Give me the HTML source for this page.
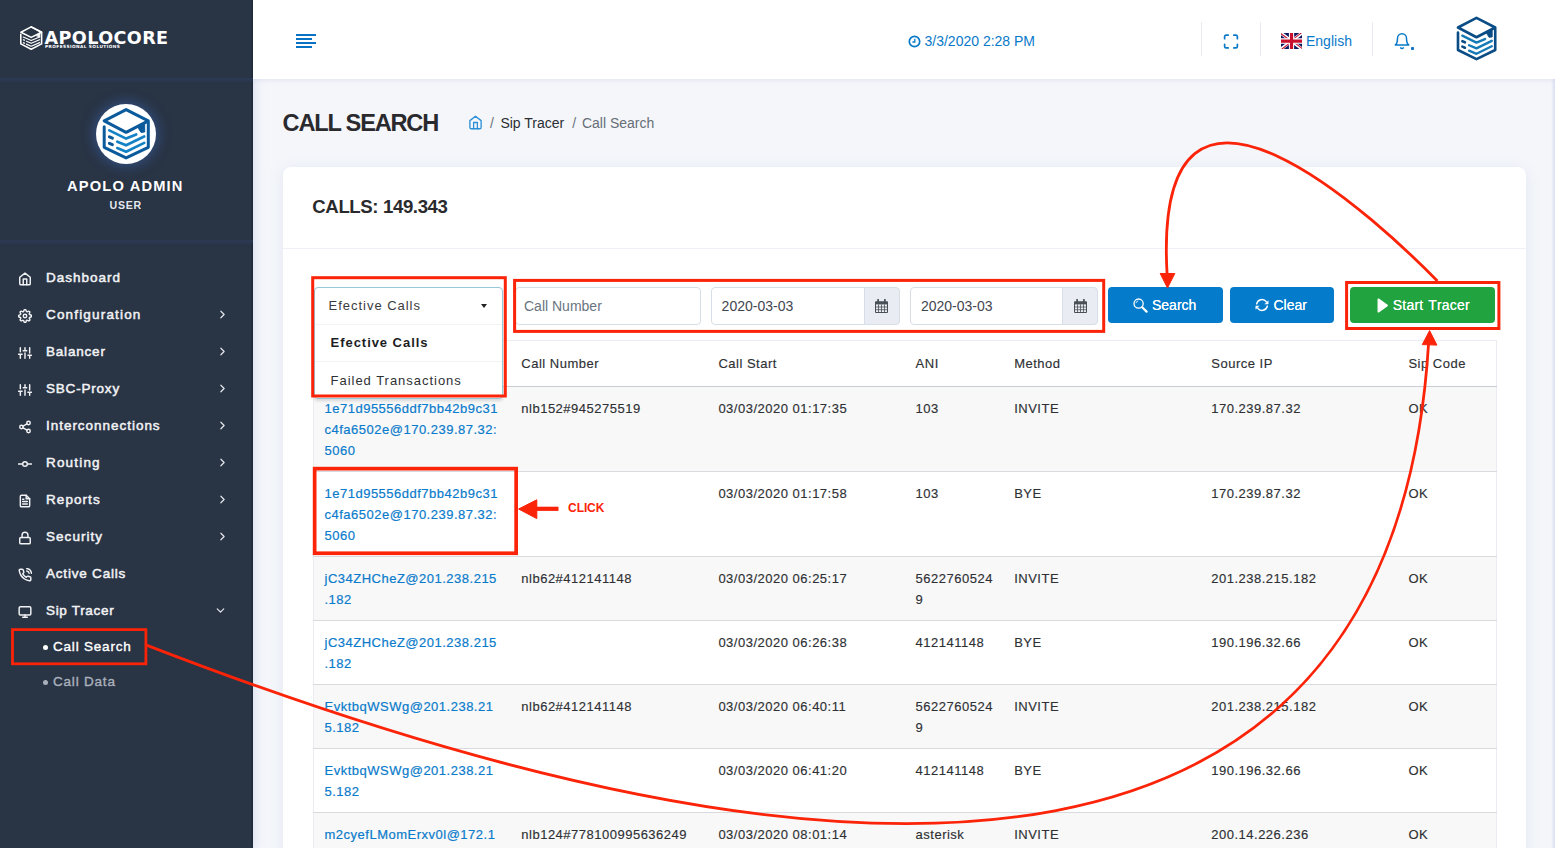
<!DOCTYPE html>
<html lang="en">
<head>
<meta charset="utf-8">
<title>Call Search</title>
<style>
*{box-sizing:border-box;margin:0;padding:0}
html,body{width:1555px;height:848px;overflow:hidden}
body{font-family:"Liberation Sans",Arial,sans-serif;font-size:14px;color:#333;background:#f4f6fa;position:relative}
a{text-decoration:none;color:#0a7bcb}
svg{display:block}
.abs{position:absolute}

/* ---------- sidebar ---------- */
#sidebar{position:absolute;left:0;top:0;width:253px;height:848px;background:#293445;z-index:5;box-shadow:0 0 10px 1px rgba(150,162,220,.3),inset -1.5px 0 0 #1f2a3b}
#brand{position:absolute;left:0;top:0;width:253px;height:79px;border-bottom:1.5px solid #2b3954;box-shadow:0 1px 3px 1px rgba(44,59,88,.9);clip-path:inset(0 0 -8px 0)}
#brand .name{position:absolute;left:44.5px;top:27.6px;font-family:"DejaVu Sans","Liberation Sans",sans-serif;font-size:17.6px;line-height:20px;font-weight:bold;color:#fff;letter-spacing:.4px;white-space:nowrap}
#brand .tag{position:absolute;left:45px;top:43.6px;font-family:"DejaVu Sans","Liberation Sans",sans-serif;font-size:4.3px;line-height:6px;font-weight:bold;color:#fff;letter-spacing:.42px;white-space:nowrap}
#user{position:absolute;left:0;top:79px;width:253px;height:161.5px;border-bottom:1.5px solid #2b3954;box-shadow:0 1px 3px 1px rgba(44,59,88,.9);clip-path:inset(0 0 -8px 0)}
#user .av{position:absolute;left:96px;top:24.5px;width:60px;height:60px;border-radius:50%;background:#fff;box-shadow:0 0 12px 3px rgba(52,84,140,.75)}
#user .uname{position:absolute;left:0;width:253px;top:98px;text-align:center;font-size:14.7px;line-height:18px;font-weight:bold;color:#fff;letter-spacing:1.15px;padding-right:2.4px}
#user .urole{position:absolute;left:0;width:253px;top:119.5px;text-align:center;font-size:10.6px;line-height:12px;font-weight:bold;color:#e4e7ec;letter-spacing:.75px;padding-right:1.6px}
.mi{position:absolute;left:0;width:253px;height:37px}
.mi .ic{position:absolute;left:17.9px;top:13px;width:14px;height:14px}
.mi .ic svg{width:14px;height:14px;stroke:#f1f2f4;fill:none;stroke-width:2.5;stroke-linecap:round;stroke-linejoin:round}
.mi .tx{position:absolute;left:46px;top:9.6px;font-size:13.5px;line-height:18px;font-weight:normal;-webkit-text-stroke:.5px #f1f2f4;color:#f1f2f4;letter-spacing:.8px;white-space:nowrap}
.mi .ch{position:absolute;left:216px;top:12px;width:13px;height:13px}
.mi .ch svg{width:13px;height:13px;stroke:#e6e8ec;fill:none;stroke-width:2.2;stroke-linecap:round;stroke-linejoin:round}
.sm{position:absolute;left:53px;font-size:13.5px;line-height:18px;font-weight:normal;-webkit-text-stroke:.38px currentColor;letter-spacing:.8px;white-space:nowrap}
.sm:before{content:"";position:absolute;left:-10.5px;top:7.5px;width:5px;height:5px;border-radius:50%;background:currentColor}

/* ---------- topbar ---------- */
#topbar{position:absolute;left:253px;top:0;width:1302px;height:79px;background:#fff;box-shadow:0 1px 5px rgba(160,170,220,.22);z-index:6;clip-path:inset(0 0 -12px 0)}
#topbar .div{position:absolute;top:22px;width:1px;height:34px;background:#e9ebf3}
.blue{color:#0879c9}

/* ---------- page ---------- */
#title{position:absolute;left:282.6px;top:108.3px;font-size:23.6px;line-height:30px;font-weight:bold;color:#2a2a2e;letter-spacing:-1.2px;white-space:nowrap}
#crumbs{position:absolute;left:469px;top:114px;font-size:14px;line-height:18px;white-space:nowrap}
#card{position:absolute;left:283px;top:167px;width:1243px;height:700px;background:#fff;border-radius:8px 8px 0 0;box-shadow:0 2px 14px rgba(170,180,215,.22)}
#card .hd{position:absolute;left:0;top:0;width:1243px;height:82px;border-bottom:1px solid #eff0f6}
#card .hd span{position:absolute;left:29.3px;top:28.3px;font-size:18.6px;line-height:24px;font-weight:bold;color:#2a2a2e;letter-spacing:-.38px;white-space:nowrap}

/* ---------- filters ---------- */
.inp{position:absolute;top:120px;height:38px;background:#fff;border:1px solid #d8dee8;border-radius:4px;font-size:14px;line-height:18px}
.inp span{position:absolute;left:9.5px;top:9.5px;white-space:nowrap}
.inp .ph{color:#69747f;left:8px;top:9px}
.inp .val{color:#3f4650;left:9.6px;top:8.8px}
.inp.d{border-radius:4px 0 0 4px}
.addon{position:absolute;top:120px;width:36px;height:38px;background:#e9ecf2;border:1px solid #d8dee8;border-radius:0 4px 4px 0}
.addon svg{position:absolute;left:10.3px;top:11.3px}
.btn{position:absolute;top:120px;height:36px;border-radius:4px;color:#fff;font-size:14px;line-height:18px}
.btn span{position:absolute;top:9px;white-space:nowrap;text-shadow:0 0 .4px #fff}
/* ---------- table ---------- */
#tbl{position:absolute;left:30px;top:173px;width:1183px;border-collapse:collapse;table-layout:fixed;font-size:13px;line-height:21px;letter-spacing:.5px;color:#2e3034}
#tbl th{height:46px;padding:0 10.5px;font-weight:normal;text-align:left;vertical-align:middle;border-top:1px solid #ebecf1;border-bottom:1px solid #c9cdd4;color:#2e3034}
#tbl td{padding:10.5px 10.5px;vertical-align:top;border-bottom:1px solid #d9dadd;white-space:nowrap}
#tbl{border-left:1px solid #ebecf1;border-right:1px solid #ebecf1}
#tbl tbody tr:nth-child(odd){background:#f8f8f8}
#tbl tr td{height:64px}
#tbl tr.r3 td{height:85px}
#tbl a{color:#0a7bcb;-webkit-text-stroke:.2px #0a7bcb}
#tbl th,#tbl td{-webkit-text-stroke:.15px #2e3034}
/* ---------- dropdown ---------- */
#dd{position:absolute;left:31px;top:120.4px;width:188.6px;height:111.6px;background:#fff;border:1px solid #96c8da;border-radius:4px;box-shadow:0 2px 3px rgba(34,36,38,.15);font-size:13px;letter-spacing:.97px;color:#2f3033}
#dd .sel{position:relative;height:35.9px;line-height:18px;padding:8.9px 0 0 13.6px;color:#3a3c40;white-space:nowrap}
#dd .sel i{position:absolute;left:166px;top:15.8px;border:3.4px solid transparent;border-top:4px solid #222;border-bottom:0}
#dd .it{height:37px;border-top:1px solid #f3f3f4;padding:8.9px 0 0 15.6px;line-height:18px;white-space:nowrap}
#dd .it+.it{padding-top:9.6px}
#dd .it.b{font-weight:bold;color:#1c1d1f;letter-spacing:.95px}
</style>
</head>
<body>

<!-- ======================= SIDEBAR ======================= -->
<div id="sidebar">
  <div id="brand">
    <svg class="abs" style="left:14px;top:20px" width="40" height="36" viewBox="0 0 40 36" fill="none" stroke="#fff" stroke-linejoin="round" stroke-linecap="round">
      <path d="M17.2 6.9 L27.6 12.2 V23.9 L17.2 29.2 L6.8 23.9 V14.4" stroke-width="1.6"/>
      <path d="M6.9 12.2 L17.2 6.9 L27.6 12.2 L17.2 17.4 Z" stroke-width="1.6"/>
      <path d="M25.8 13.2 V17 L22.8 16 Z" fill="#fff" stroke-width=".8"/>
      <path d="M9.2 17 L17.2 20.5 L25.6 17" stroke-width="1.15"/>
      <path d="M12.4 21.2 L17.2 23.3 L25.6 19.7" stroke-width="1.15"/>
      <path d="M12.4 24.1 L17.2 26.2 L25.6 22.6" stroke-width="1.15"/>
      <path d="M9.5 19.8 L10.4 20.2M9.5 22.8 L10.4 23.2" stroke-width="1.3"/>
    </svg>
    <div class="name">APOLOCORE</div>
    <div class="tag">PROFESSIONAL SOLUTIONS</div>
  </div>

  <div id="user">
    <div class="av">
      <svg class="abs" style="left:-6px;top:-5.5px" width="72" height="72" viewBox="0 0 72 72" fill="none" stroke-linejoin="round" stroke-linecap="round">
        <path d="M14.2 28.8 V49.3 L36.1 59.9 L58.3 49.3 V22.9 L36.1 11.6 L14.2 22.9 L36.1 34.3 L58.3 22.9" stroke="#0b5a9c" stroke-width="3"/>
        <path d="M48 28.8 L54.7 25.2 V34 L51 34.4 L49 31.2 Z" fill="#0b5a9c" stroke="#0b5a9c" stroke-width="1"/>
        <path d="M19.3 32.4 L36.1 40.6 L46.2 36.4" stroke="#1482c4" stroke-width="2.7"/>
        <path d="M27.3 43.7 L36.1 47.3 L54.2 38.5" stroke="#1482c4" stroke-width="2.7"/>
        <path d="M27.3 50.1 L36.1 53.7 L54.2 44.9" stroke="#1482c4" stroke-width="2.7"/>
        <path d="M19.4 38.9 L22.4 40.2M19.4 45.3 L22.4 46.6" stroke="#0b5a9c" stroke-width="3"/>
      </svg>
    </div>
    <div class="uname">APOLO ADMIN</div>
    <div class="urole">USER</div>
  </div>

  <div class="mi" style="top:259px"><span class="ic"><svg viewBox="0 0 24 24"><path d="M3 9l9-7 9 7v11a2 2 0 0 1-2 2H5a2 2 0 0 1-2-2z"/><polyline points="9 22 9 12 15 12 15 22"/></svg></span><span class="tx" style="letter-spacing:1.00px">Dashboard</span></div>
  <div class="mi" style="top:296px"><span class="ic"><svg viewBox="0 0 24 24"><circle cx="12" cy="12" r="3"/><path d="M19.4 15a1.65 1.65 0 0 0 .33 1.82l.06.06a2 2 0 0 1 0 2.83 2 2 0 0 1-2.83 0l-.06-.06a1.65 1.65 0 0 0-1.82-.33 1.65 1.65 0 0 0-1 1.51V21a2 2 0 0 1-2 2 2 2 0 0 1-2-2v-.09A1.65 1.65 0 0 0 9 19.4a1.65 1.65 0 0 0-1.82.33l-.06.06a2 2 0 0 1-2.83 0 2 2 0 0 1 0-2.83l.06-.06a1.65 1.65 0 0 0 .33-1.82 1.65 1.65 0 0 0-1.51-1H3a2 2 0 0 1-2-2 2 2 0 0 1 2-2h.09A1.65 1.65 0 0 0 4.6 9a1.65 1.65 0 0 0-.33-1.82l-.06-.06a2 2 0 0 1 0-2.83 2 2 0 0 1 2.83 0l.06.06a1.65 1.65 0 0 0 1.82.33H9a1.65 1.65 0 0 0 1-1.51V3a2 2 0 0 1 2-2 2 2 0 0 1 2 2v.09a1.65 1.65 0 0 0 1 1.51 1.65 1.65 0 0 0 1.82-.33l.06-.06a2 2 0 0 1 2.83 0 2 2 0 0 1 0 2.83l-.06.06a1.65 1.65 0 0 0-.33 1.82V9a1.65 1.65 0 0 0 1.51 1H21a2 2 0 0 1 2 2 2 2 0 0 1-2 2h-.09a1.65 1.65 0 0 0-1.51 1z"/></svg></span><span class="tx" style="letter-spacing:1.17px">Configuration</span><span class="ch"><svg viewBox="0 0 24 24"><polyline points="9 18 15 12 9 6"/></svg></span></div>
  <div class="mi" style="top:333px"><span class="ic"><svg viewBox="0 0 24 24"><path d="M4 21v-7M4 10V3M12 21v-9M12 8V3M20 21v-5M20 12V3M1 14h6M9 8h6M17 16h6"/></svg></span><span class="tx">Balancer</span><span class="ch"><svg viewBox="0 0 24 24"><polyline points="9 18 15 12 9 6"/></svg></span></div>
  <div class="mi" style="top:370px"><span class="ic"><svg viewBox="0 0 24 24"><path d="M4 21v-7M4 10V3M12 21v-9M12 8V3M20 21v-5M20 12V3M1 14h6M9 8h6M17 16h6"/></svg></span><span class="tx">SBC-Proxy</span><span class="ch"><svg viewBox="0 0 24 24"><polyline points="9 18 15 12 9 6"/></svg></span></div>
  <div class="mi" style="top:407px"><span class="ic"><svg viewBox="0 0 24 24"><circle cx="18" cy="5" r="3"/><circle cx="6" cy="12" r="3"/><circle cx="18" cy="19" r="3"/><path d="M8.59 13.51l6.83 3.98M15.41 6.51l-6.82 3.98"/></svg></span><span class="tx" style="letter-spacing:0.97px">Interconnections</span><span class="ch"><svg viewBox="0 0 24 24"><polyline points="9 18 15 12 9 6"/></svg></span></div>
  <div class="mi" style="top:444px"><span class="ic"><svg viewBox="0 0 24 24"><circle cx="12" cy="12" r="4"/><path d="M1.05 12H7M17.01 12h5.95"/></svg></span><span class="tx" style="letter-spacing:1.18px">Routing</span><span class="ch"><svg viewBox="0 0 24 24"><polyline points="9 18 15 12 9 6"/></svg></span></div>
  <div class="mi" style="top:481px"><span class="ic"><svg viewBox="0 0 24 24"><path d="M14 2H6a2 2 0 0 0-2 2v16a2 2 0 0 0 2 2h12a2 2 0 0 0 2-2V8z"/><path d="M14 2v6h6M16 13H8M16 17H8M10 9H8"/></svg></span><span class="tx" style="letter-spacing:1.07px">Reports</span><span class="ch"><svg viewBox="0 0 24 24"><polyline points="9 18 15 12 9 6"/></svg></span></div>
  <div class="mi" style="top:518px"><span class="ic"><svg viewBox="0 0 24 24"><rect x="3" y="11" width="18" height="11" rx="2" ry="2"/><path d="M7 11V7a5 5 0 0 1 10 0v4"/></svg></span><span class="tx" style="letter-spacing:1.04px">Security</span><span class="ch"><svg viewBox="0 0 24 24"><polyline points="9 18 15 12 9 6"/></svg></span></div>
  <div class="mi" style="top:555px"><span class="ic"><svg viewBox="0 0 24 24"><path d="M15.05 5A5 5 0 0 1 19 8.95M15.05 1A9 9 0 0 1 23 8.94m-1 7.98v3a2 2 0 0 1-2.18 2 19.79 19.79 0 0 1-8.63-3.07 19.5 19.5 0 0 1-6-6 19.79 19.79 0 0 1-3.07-8.67A2 2 0 0 1 4.11 2h3a2 2 0 0 1 2 1.72 12.84 12.84 0 0 0 .7 2.81 2 2 0 0 1-.45 2.11L8.09 9.91a16 16 0 0 0 6 6l1.27-1.27a2 2 0 0 1 2.11-.45 12.84 12.84 0 0 0 2.81.7A2 2 0 0 1 22 16.92z"/></svg></span><span class="tx">Active Calls</span></div>
  <div class="mi" style="top:592px"><span class="ic"><svg viewBox="0 0 24 24"><rect x="2" y="3" width="20" height="14" rx="2" ry="2"/><path d="M8 21h8M12 17v4"/></svg></span><span class="tx" style="letter-spacing:0.68px">Sip Tracer</span><span class="ch" style="left:214px"><svg viewBox="0 0 24 24"><polyline points="6 9 12 15 18 9"/></svg></span></div>
  <div class="sm" style="top:637.5px;color:#fff">Call Search</div>
  <div class="sm" style="top:672.5px;color:#a9b0bc">Call Data</div>
</div>

<!-- ======================= TOPBAR ======================= -->
<div id="topbar">
  <svg class="abs" style="left:43px;top:34px" width="20" height="14" viewBox="0 0 20 14"><path d="M0 1h20M0 5h16M0 9h20M0 13h16" stroke="#0872c4" stroke-width="2" fill="none"/></svg>
  <svg class="abs" style="left:655px;top:34.6px" width="13" height="13" viewBox="0 0 13 13" fill="none" stroke="#0879c9"><circle cx="6.5" cy="6.5" r="5.2" stroke-width="1.7"/><path d="M6.8 3.8V7H4.4" stroke-width="1.3"/></svg>
  <div class="abs blue" style="left:671.5px;top:32px;font-size:14px;line-height:18px;white-space:nowrap">3/3/2020 2:28 PM</div>
  <div class="div" style="left:948px"></div>
  <svg class="abs" style="left:969px;top:33px" width="18" height="17" viewBox="0 0 24 24" fill="none" stroke="#0879c9" stroke-width="2.4" stroke-linecap="round" stroke-linejoin="round"><path d="M8 3H5a2 2 0 0 0-2 2v3m18 0V5a2 2 0 0 0-2-2h-3m0 18h3a2 2 0 0 0 2-2v-3M3 16v3a2 2 0 0 0 2 2h3"/></svg>
  <div class="div" style="left:1007px"></div>
  <svg class="abs" style="left:1028px;top:33px" width="21" height="16" viewBox="0 0 640 480" preserveAspectRatio="none"><path fill="#0a1862" d="M0 0h640v480H0z"/><path fill="#fff" d="m75 0 244 181L562 0h78v62L400 241l240 178v61h-80L320 301 81 480H0v-60l239-178L0 64V0h75z"/><path fill="#c8102e" d="m424 281 216 159v40L369 281h55zm-184 20 6 35L54 480H0l240-179zM640 0v3L391 191l2-44L590 0h50zM0 0l239 176h-60L0 42V0z"/><path fill="#fff" d="M241 0v480h160V0H241zM0 160v160h640V160H0z"/><path fill="#c8102e" d="M0 193v96h640v-96H0zM273 0v480h96V0h-96z"/></svg>
  <div class="abs blue" style="left:1053px;top:32px;font-size:14px;line-height:18px">English</div>
  <div class="div" style="left:1119px"></div>
  <svg class="abs" style="left:1140px;top:32px" width="18" height="19" viewBox="0 0 24 25" fill="none" stroke="#0879c9" stroke-width="2" stroke-linecap="round" stroke-linejoin="round"><path d="M18 8A6 6 0 0 0 6 8c0 7-3 9-3 9h18s-3-2-3-9"/><path d="M13.73 21a2 2 0 0 1-3.46 0"/></svg>
  <div class="abs" style="left:1157.8px;top:46.9px;width:3px;height:3px;border-radius:.8px;background:#0f74c6"></div>
  <svg class="abs" style="left:1192.8px;top:8.2px" width="60.8" height="61.4" viewBox="0 0 72 72" preserveAspectRatio="none" fill="none" stroke-linejoin="round" stroke-linecap="round">
    <path d="M14.2 28.8 V49.3 L36.1 59.9 L58.3 49.3 V22.9 L36.1 11.6 L14.2 22.9 L36.1 34.3 L58.3 22.9" stroke="#0a4c85" stroke-width="3.1"/>
    <path d="M48 28.8 L54.7 25.2 V34 L51 34.4 L49 31.2 Z" fill="#0a4c85" stroke="#0a4c85" stroke-width="1"/>
    <path d="M19.3 32.4 L36.1 40.6 L46.2 36.4" stroke="#1579b6" stroke-width="2.8"/>
    <path d="M27.3 43.7 L36.1 47.3 L54.2 38.5" stroke="#1579b6" stroke-width="2.8"/>
    <path d="M27.3 50.1 L36.1 53.7 L54.2 44.9" stroke="#1579b6" stroke-width="2.8"/>
    <path d="M19.4 38.9 L22.4 40.2M19.4 45.3 L22.4 46.6" stroke="#0a4c85" stroke-width="3.1"/>
  </svg>
</div>

<!-- ======================= PAGE ======================= -->
<div class="abs" style="right:0;top:79px;width:4px;height:769px;background:linear-gradient(90deg,rgba(222,227,243,0),rgba(214,220,240,.9));z-index:2"></div>
<div id="title">CALL SEARCH</div>
<div id="crumbs">
  <svg class="abs" style="left:-1.2px;top:0.6px" width="15" height="15" viewBox="0 0 24 24" fill="none" stroke="#2a8fd6" stroke-width="2.1" stroke-linecap="round" stroke-linejoin="round"><path d="M3 9l9-7 9 7v11a2 2 0 0 1-2 2H5a2 2 0 0 1-2-2z"/><path d="M9 22V12h6v10"/></svg>
  <span class="abs" style="left:21px;color:#6c757d">/</span>
  <span class="abs" style="left:31.4px;color:#2b2e33">Sip Tracer</span>
  <span class="abs" style="left:103.2px;color:#6c757d">/</span>
  <span class="abs" style="left:112.9px;color:#666e77">Call Search</span>
</div>

<div id="card">
  <div class="hd"><span>CALLS: 149.343</span></div>
  <!-- filter row (coords relative to card: card left=283, top=167) -->
  <div class="inp" style="left:232px;width:186px"><span class="ph">Call Number</span></div>
  <div class="inp d" style="left:428px;width:154px"><span class="val">2020-03-03</span></div>
  <div class="addon" style="left:581px"><svg width="13" height="14" viewBox="0 0 13 14"><path d="M0.5 2.8h12v10.7h-12z" fill="none" stroke="#495057" stroke-width="1"/><path d="M0.5 2.8h12v2.6h-12z" fill="#495057"/><path d="M3.1 0.6v3M9.9 0.6v3" stroke="#495057" stroke-width="1.7" stroke-linecap="round"/><path d="M3.5 5.4v8M6.5 5.4v8M9.5 5.4v8M0.5 8h12M0.5 10.7h12" stroke="#495057" stroke-width=".8"/></svg></div>
  <div class="inp d" style="left:627.3px;width:152.7px"><span class="val">2020-03-03</span></div>
  <div class="addon" style="left:779.3px;width:35.5px"><svg width="13" height="14" viewBox="0 0 13 14"><path d="M0.5 2.8h12v10.7h-12z" fill="none" stroke="#495057" stroke-width="1"/><path d="M0.5 2.8h12v2.6h-12z" fill="#495057"/><path d="M3.1 0.6v3M9.9 0.6v3" stroke="#495057" stroke-width="1.7" stroke-linecap="round"/><path d="M3.5 5.4v8M6.5 5.4v8M9.5 5.4v8M0.5 8h12M0.5 10.7h12" stroke="#495057" stroke-width=".8"/></svg></div>

  <div class="btn" style="left:825px;width:115px;background:#047bcb">
    <svg class="abs" style="left:25px;top:11px" width="15" height="15" viewBox="0 0 15 15" fill="none" stroke="#fff"><circle cx="5.6" cy="5.6" r="4.6" stroke-width="1.3"/><path d="M9.2 9.2L13.6 13.6" stroke-width="2.2" stroke-linecap="round"/><path d="M2.9 5.2A2.9 2.9 0 0 1 5.2 2.9" stroke-width=".8"/></svg>
    <span style="left:44px">Search</span>
  </div>
  <div class="btn" style="left:947px;width:104px;background:#047bcb">
    <svg class="abs" style="left:25px;top:11px" width="14" height="14" viewBox="-7 -7 14 14" fill="none" stroke="#fff" stroke-width="1.45" stroke-linecap="round"><path d="M-5.3 -1.1A5.4 5.4 0 0 1 4.4 -3.1"/><path d="M5.3 1.1A5.4 5.4 0 0 1 -4.4 3.1"/><path d="M6.2 -3.9V-1H3.1Z M-6.2 3.9V1H-3.1Z" fill="#fff" stroke-width=".5" stroke-linejoin="round"/></svg>
    <span style="left:43.5px">Clear</span>
  </div>
  <div class="btn" style="left:1067px;width:145px;background:#21a33f">
    <svg class="abs" style="left:26.5px;top:10.5px" width="12" height="16" viewBox="0 0 12 16"><path d="M1.4 1.3L10.1 7.5L1.4 13.7Z" fill="#fff" stroke="#fff" stroke-width="1.7" stroke-linejoin="round"/></svg>
    <span style="left:42.8px;font-kerning:none;letter-spacing:.22px;word-spacing:.6px">Start Tracer</span>
  </div>

  <!-- table -->
  <table id="tbl">
    <colgroup><col style="width:197.3px"><col style="width:197.1px"><col style="width:197.2px"><col style="width:98.6px"><col style="width:197.1px"><col style="width:197.2px"><col style="width:98.5px"></colgroup>
    <thead><tr><th>Call ID</th><th>Call Number</th><th>Call Start</th><th>ANI</th><th>Method</th><th>Source IP</th><th>Sip Code</th></tr></thead>
    <tbody>
      <tr class="r3"><td><a>1e71d95556ddf7bb42b9c31<br>c4fa6502e@170.239.87.32:<br>5060</a></td><td>nlb152#945275519</td><td>03/03/2020 01:17:35</td><td>103</td><td>INVITE</td><td>170.239.87.32</td><td>OK</td></tr>
      <tr class="r3"><td><a>1e71d95556ddf7bb42b9c31<br>c4fa6502e@170.239.87.32:<br>5060</a></td><td></td><td>03/03/2020 01:17:58</td><td>103</td><td>BYE</td><td>170.239.87.32</td><td>OK</td></tr>
      <tr><td><a>jC34ZHCheZ@201.238.215<br>.182</a></td><td>nlb62#412141148</td><td>03/03/2020 06:25:17</td><td>5622760524<br>9</td><td>INVITE</td><td>201.238.215.182</td><td>OK</td></tr>
      <tr><td><a>jC34ZHCheZ@201.238.215<br>.182</a></td><td></td><td>03/03/2020 06:26:38</td><td>412141148</td><td>BYE</td><td>190.196.32.66</td><td>OK</td></tr>
      <tr><td><a>EvktbqWSWg@201.238.21<br>5.182</a></td><td>nlb62#412141148</td><td>03/03/2020 06:40:11</td><td>5622760524<br>9</td><td>INVITE</td><td>201.238.215.182</td><td>OK</td></tr>
      <tr><td><a>EvktbqWSWg@201.238.21<br>5.182</a></td><td></td><td>03/03/2020 06:41:20</td><td>412141148</td><td>BYE</td><td>190.196.32.66</td><td>OK</td></tr>
      <tr><td><a>m2cyefLMomErxv0l@172.1<br>6.1.20</a></td><td>nlb124#778100995636249</td><td>03/03/2020 08:01:14</td><td>asterisk</td><td>INVITE</td><td>200.14.226.236</td><td>OK</td></tr>
    </tbody>
  </table>

  <!-- open dropdown (over the table) -->
  <div id="dd">
    <div class="sel">Efective Calls<i></i></div>
    <div class="it b">Efective Calls</div>
    <div class="it">Failed Transactions</div>
  </div>
</div>

<svg id="ann" class="abs" style="left:0;top:0;z-index:20;pointer-events:none" width="1555" height="848" viewBox="0 0 1555 848" fill="none" stroke="#fb2308">
  <!-- red boxes -->
  <rect x="12.5" y="629.6" width="133.4" height="34.2" stroke-width="2.8"/>
  <rect x="312.7" y="277.7" width="192.6" height="118.3" stroke-width="3"/>
  <rect x="514.6" y="280.4" width="589.1" height="51" stroke-width="3"/>
  <rect x="1346.6" y="282.5" width="152.3" height="46" stroke-width="3"/>
  <rect x="314.65" y="468.65" width="201.5" height="84.6" stroke-width="3.7"/>
  <!-- curved connectors -->
  <path d="M146.4 645.1 C892.6 933.7 1395.2 899 1428.6 343" stroke-width="2.8"/>
  <path d="M1437.4 280.9 C1386.4 229.3 1150.3 0.8 1167.2 276" stroke-width="2.8"/>
  <path d="M1429.6 330.6 L1436.9 345.1 L1422.3 344.6 Z" fill="#fb2308" stroke-width="1"/>
  <path d="M1167.5 288 L1160.2 273.5 L1174.8 273.5 Z" fill="#fb2308" stroke-width="1"/>
  <!-- click arrow -->
  <path d="M558.5 508.8 L536 508.8" stroke-width="4.2"/>
  <path d="M518.6 509 L536.8 499.8 L536.8 518.6 Z" fill="#fb2308" stroke-width="1"/>
  <text x="568.1" y="511.9" font-family="Liberation Sans, Arial, sans-serif" font-size="12" font-weight="bold" fill="#fb2308" stroke="none" letter-spacing="-0.1">CLICK</text>
</svg>
</body>
</html>
